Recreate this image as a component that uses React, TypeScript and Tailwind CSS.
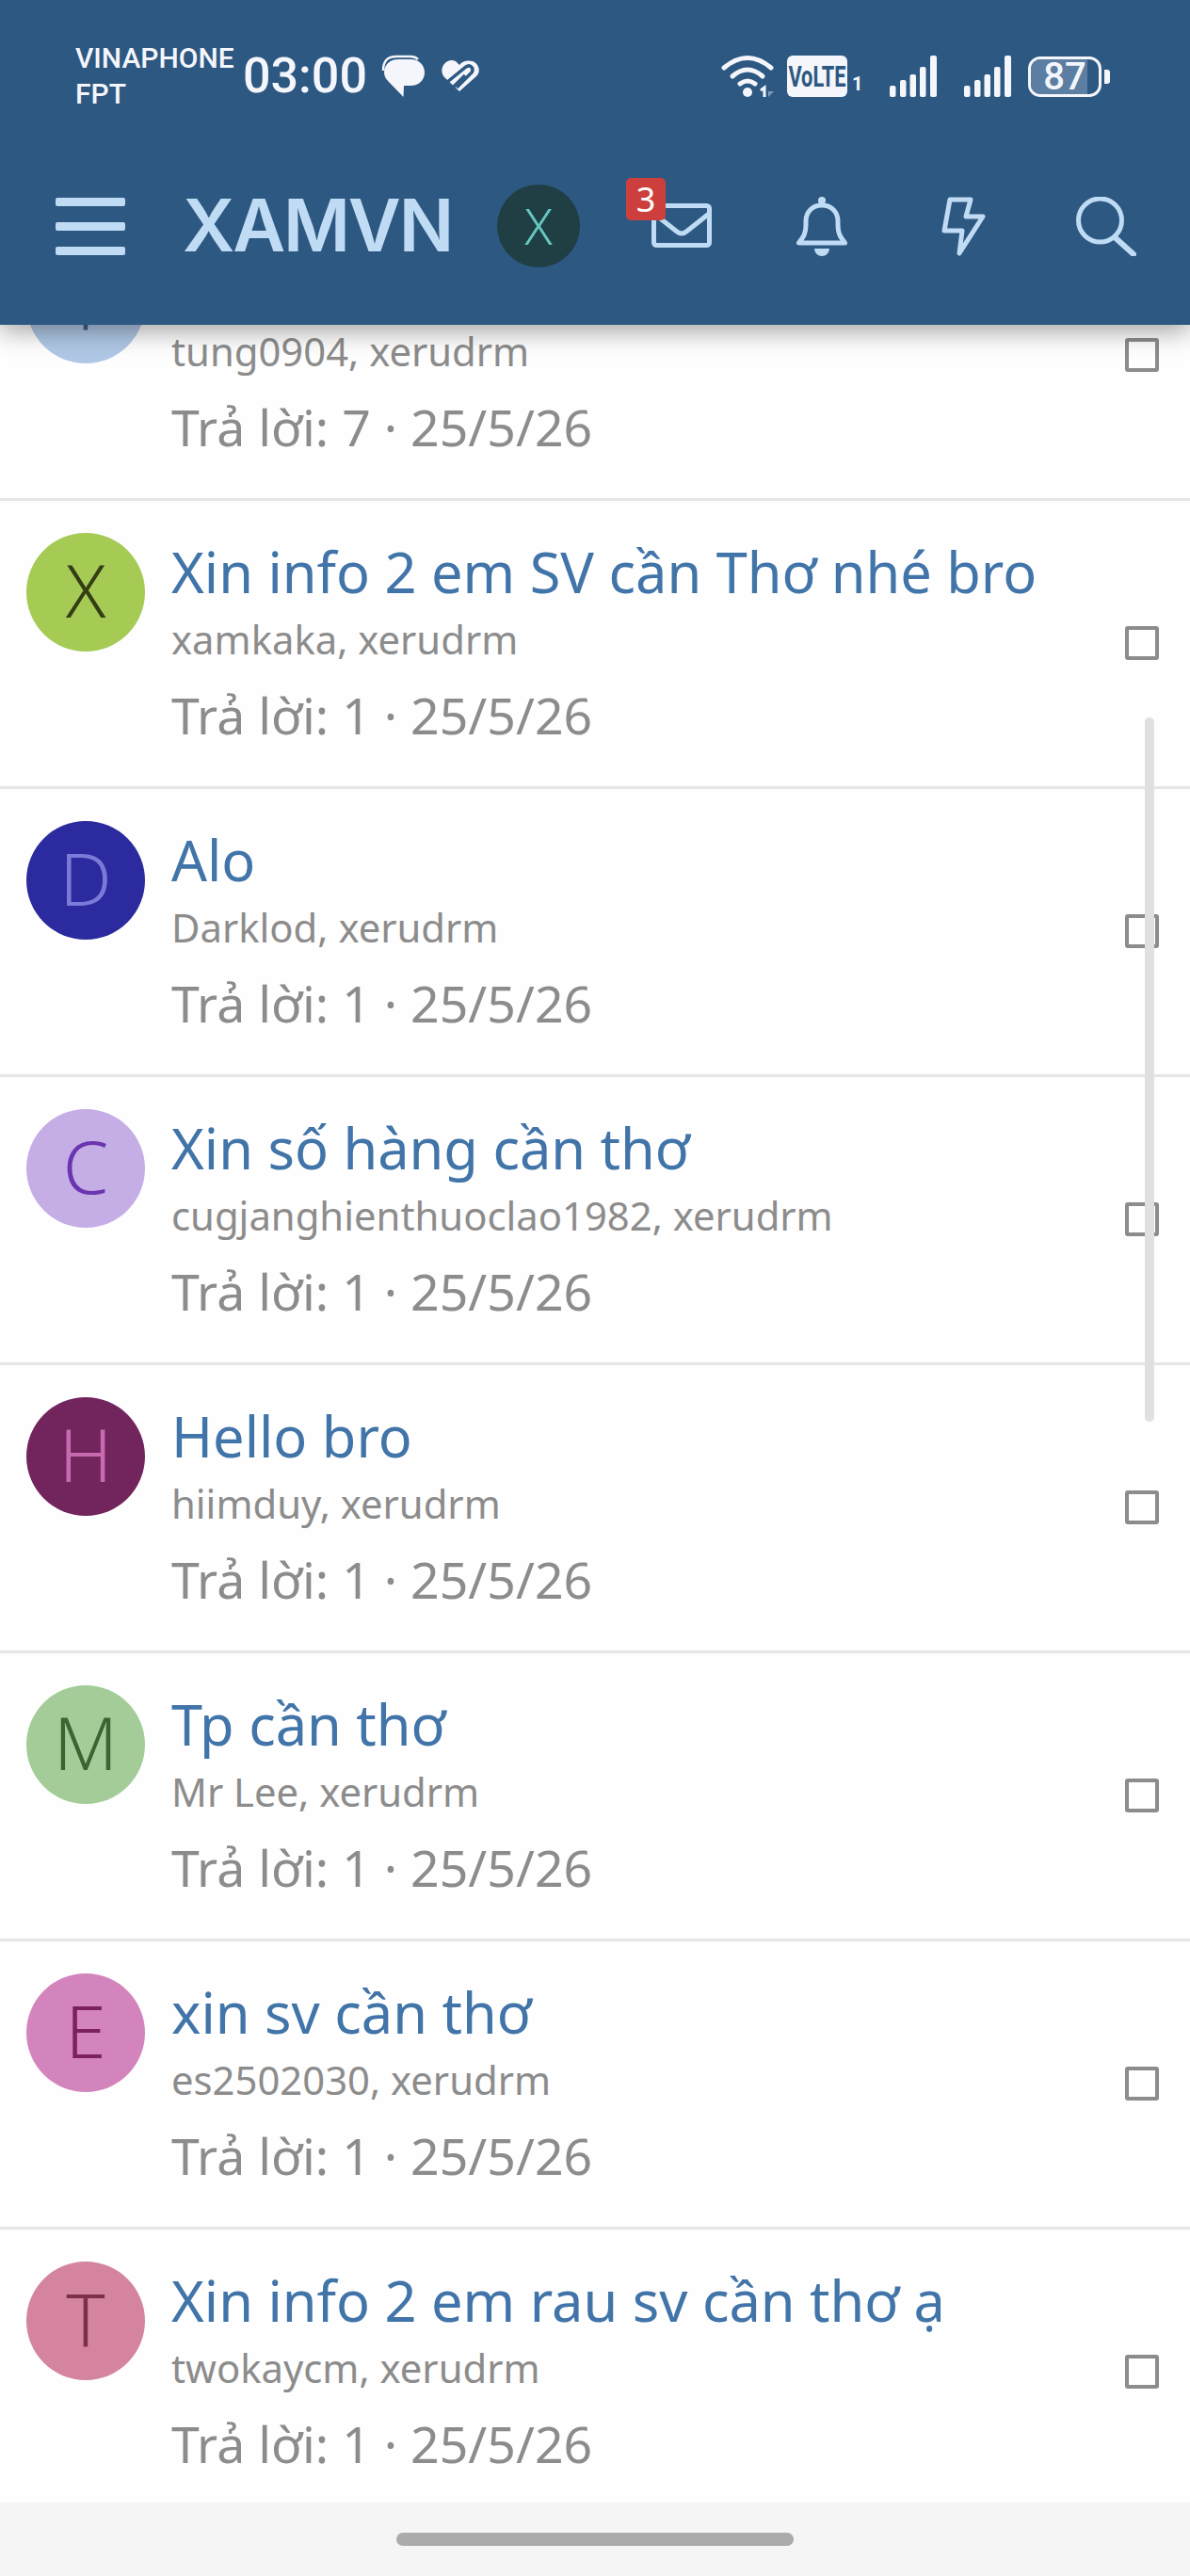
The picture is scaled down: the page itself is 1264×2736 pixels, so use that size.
const rows = [
  { l: "T", bg: "bg-[#b0c8e6]", fg: "text-[#3e5f94]", t: "", u: "tung0904, xerudrm", r: 7 },
  { l: "X", bg: "bg-[#a5cb55]", fg: "text-[#343d14]", t: "Xin info 2 em SV cần Thơ nhé bro", u: "xamkaka, xerudrm", r: 1 },
  { l: "D", bg: "bg-[#2b2a9e]", fg: "text-[#7a7ad8]", t: "Alo", u: "Darklod, xerudrm", r: 1 },
  { l: "C", bg: "bg-[#c5aee6]", fg: "text-[#6a35b0]", t: "Xin số hàng cần thơ", u: "cugjanghienthuoclao1982, xerudrm", r: 1 },
  { l: "H", bg: "bg-[#72245c]", fg: "text-[#c86ab0]", t: "Hello bro", u: "hiimduy, xerudrm", r: 1 },
  { l: "M", bg: "bg-[#a3cc98]", fg: "text-[#3b6434]", t: "Tp cần thơ", u: "Mr Lee, xerudrm", r: 1 },
  { l: "E", bg: "bg-[#d484bc]", fg: "text-[#7c2060]", t: "xin sv cần thơ", u: "es2502030, xerudrm", r: 1 },
  { l: "T", bg: "bg-[#d4849f]", fg: "text-[#7c2f48]", t: "Xin info 2 em rau sv cần thơ ạ", u: "twokaycm, xerudrm", r: 1 },
];

function Signal() {
  return (
    <svg width="51" height="44" viewBox="0 0 51 44" fill="#f4f6fb">
      <rect x="0" y="32" width="6.5" height="12" rx="2" />
      <rect x="11" y="26" width="6.5" height="18" rx="2" />
      <rect x="21.5" y="20" width="6.5" height="24" rx="2" />
      <rect x="32" y="12" width="6.5" height="32" rx="2" />
      <rect x="43" y="0" width="7" height="44" rx="2" />
    </svg>
  );
}

function Wifi() {
  return (
    <svg width="58" height="48" viewBox="764 56 58 48" fill="none" stroke="#f4f6fb" strokeLinecap="round">
      <path d="M767 71 Q792 50 817 71" strokeWidth="5" />
      <path d="M776 80 Q792 66 808 80" strokeWidth="5" />
      <path d="M784 88 Q792 82 800 88" strokeWidth="5" />
      <circle cx="792" cy="97" r="5" fill="#f4f6fb" stroke="none" />
      <path d="M806 95 L810 92 V102" strokeWidth="3" strokeLinecap="butt" />
      <path d="M814 91 V102 L820 96 H814 Z" fill="#7f9ab8" stroke="none" />
    </svg>
  );
}

function Bubble() {
  return (
    <svg width="50" height="50" viewBox="404 58 50 50">
      <path d="M407 77 C407 66 412 62 421 62 H436 C439 62 442 63 444 65" fill="none" stroke="#f4f6fb" strokeWidth="2.5" />
      <path d="M423 65 H436 C445 65 451 71 451 79 C451 87 445 93 436 93 H429 L428.5 105 L413 89 C410 86 408 83 408 79 C408 71 414 65 423 65 Z" fill="#f4f6fb" />
    </svg>
  );
}

function Heart() {
  return (
    <svg width="42" height="36" viewBox="467 64 42 36">
      <path d="M487 98 L471 83 C465 76 470 65 479 65 C483 65 485 68 487 70 C491 65 496 65 501 66 C508 69 510 77 505 82 Z" fill="#f4f6fb" />
      <path d="M473 89 L494 72 C498 69 503 73 500 78 L484 94" fill="none" stroke="#2d5882" strokeWidth="3.5" />
      <path d="M480 94 L493 81" fill="none" stroke="#2d5882" strokeWidth="3.5" />
    </svg>
  );
}

export default function App() {
  const ui = { fontFamily: '"Noto Sans", sans-serif' };
  return (
    <div className="relative flex h-[2736px] w-[1264px] flex-col overflow-hidden bg-[#fefefe]" style={ui}>
      <header className="relative z-10 flex h-[345px] shrink-0 flex-col bg-[#2d5882] shadow-[0_6px_26px_rgba(0,0,0,0.38)]">
        <div className="mt-[48px] flex h-[66px] items-center pl-[80px] text-[#f4f6fb]">
          <div className="w-[178px] text-[30px] leading-[38px] font-medium" style={{ fontFamily: "Roboto, sans-serif" }}>
            <div>VINAPHONE</div>
            <div>FPT</div>
          </div>
          <div className="text-[52px] leading-none font-medium" style={{ fontFamily: "Roboto, sans-serif" }}>03:00</div>
          <div className="ml-[14px]"><Bubble /></div>
          <div className="ml-[14px]"><Heart /></div>
          <div className="ml-[256px]"><Wifi /></div>
          <div className="ml-[12px] flex h-[44px] w-[64px] items-center justify-center overflow-hidden rounded-[6px] bg-[#f4f6fb] text-[32px] leading-none font-bold text-[#2d5882]" style={{ fontFamily: "Roboto, sans-serif" }}>
            <span className="scale-x-[0.68]">VoLTE</span>
          </div>
          <div className="mt-[16px] ml-[5px] w-[9px] text-[20px] leading-none font-bold" style={{ fontFamily: "Roboto, sans-serif" }}>1</div>
          <div className="ml-[31px]"><Signal /></div>
          <div className="ml-[28px]"><Signal /></div>
          <div className="relative ml-[17px] flex h-[43px] w-[78px] items-center justify-center rounded-[13px] border-[3px] border-[#f4f6fb]">
            <div className="absolute inset-y-0 left-0 w-[60px] rounded-l-[10px] bg-[#5c7ea3]" />
            <span className="relative text-[40px] leading-[37px] font-medium" style={{ fontFamily: "Roboto, sans-serif" }}>87</span>
          </div>
          <div className="ml-[3px] h-[15px] w-[6px] rounded-r-[3px] bg-[#f4f6fb]" />
        </div>
        <div className="mt-[78px] flex h-[96px] items-center pl-[59px]">
          <div className="flex w-[74px] flex-col gap-[17px]">
            <div className="h-[9px] rounded-[2px] bg-[#c0dcf5]" />
            <div className="h-[9px] rounded-[2px] bg-[#c0dcf5]" />
            <div className="h-[9px] rounded-[2px] bg-[#c0dcf5]" />
          </div>
          <div className="mt-[-2px] ml-[61px] w-[334px] text-[77px] leading-none font-semibold tracking-[-2.2px] text-[#c0dcf5]" style={{ fontFamily: "Inter, sans-serif" }}>XAMVN</div>
          <div className="flex h-[88px] w-[88px] items-center justify-center rounded-full bg-[#1f3f44] pb-[2px] text-[54px] leading-none font-light text-[#66c6c2]">X</div>
          <div className="relative ml-[76px] mt-[-1px]">
            <svg width="64" height="47" viewBox="0 0 64 47" fill="none" stroke="#c0dcf5" strokeWidth="5" strokeLinejoin="round" className="block">
              <rect x="2.5" y="2.5" width="59" height="42" rx="3" />
              <path d="M3 11 L27 30 Q32 34 37 30 L61 11" />
            </svg>
            <div className="absolute -top-[27px] -left-[27px] flex h-[45px] w-[42px] items-center justify-center rounded-[5px] bg-[#cc3f3c] text-[36px] leading-none text-white">3</div>
          </div>
          <svg width="56" height="63" viewBox="0 0 56 63" fill="none" stroke="#c0dcf5" strokeWidth="5" strokeLinejoin="round" className="ml-[89px]">
            <circle cx="28" cy="4" r="4" fill="#c0dcf5" stroke="none" />
            <path d="M3.5 49 H52.5 C49 44 45 41 45 30 V26 C45 16 38 9 28 9 C18 9 11 16 11 26 V30 C11 41 7 44 3.5 49 Z" />
            <path d="M20 55 H36 A8 8 0 0 1 20 55 Z" fill="#c0dcf5" stroke="none" />
          </svg>
          <svg width="47" height="63" viewBox="0 0 47 63" fill="none" stroke="#c0dcf5" strokeWidth="5" strokeLinejoin="round" className="ml-[99px]">
            <path d="M9 3 H31 L26 21 H44 L19 60 L22 36 H3 Z" />
          </svg>
          <svg width="64" height="63" viewBox="0 0 64 63" fill="none" stroke="#c0dcf5" strokeWidth="5" className="ml-[96px]">
            <circle cx="25.5" cy="25" r="23" />
            <path d="M41 43 L61 61" strokeWidth="6" strokeLinecap="round" />
          </svg>
        </div>
      </header>

      <main className="flex-1 overflow-hidden">
        <div className="mt-[-119px]">
          {rows.map((r, i) => (
            <div key={i} className="flex h-[306px] items-start border-b-[3px] border-[#e6e6e6] pt-[34px] pl-[28px]">
              <div className={`flex h-[126px] w-[126px] shrink-0 items-center justify-center rounded-full pb-[7px] text-[78px] leading-none font-light ${r.bg} ${r.fg}`}>{r.l}</div>
              <div className="ml-[28px] min-w-0 flex-1">
                <div className="mt-[7px] h-[68px] text-[59.5px] leading-[68px] whitespace-nowrap text-[#4174a8]">{r.t}</div>
                <div className="h-[62px] pt-[7px] text-[41.8px] leading-[62px] whitespace-nowrap text-[#8c8c8c]">{r.u}</div>
                <div className="mt-[22px] text-[53.6px] leading-[70px] whitespace-nowrap text-[#8c8c8c]">Trả lời: {r.r} · 25/5/26</div>
              </div>
              <div className="mt-[99px] mr-[33px] h-[36px] w-[36px] shrink-0 rounded-[3px] border-[4px] border-[#8c8c8c]" />
            </div>
          ))}
        </div>
      </main>

      <div className="absolute top-[762px] left-[1216px] z-0 h-[748px] w-[10px] rounded-full bg-[#e0e0e2]" />

      <footer className="flex h-[78px] shrink-0 items-start justify-center bg-[#f5f5f5] pt-[32px]">
        <div className="h-[14px] w-[422px] rounded-full bg-[#ababab]" />
      </footer>
    </div>
  );
}
